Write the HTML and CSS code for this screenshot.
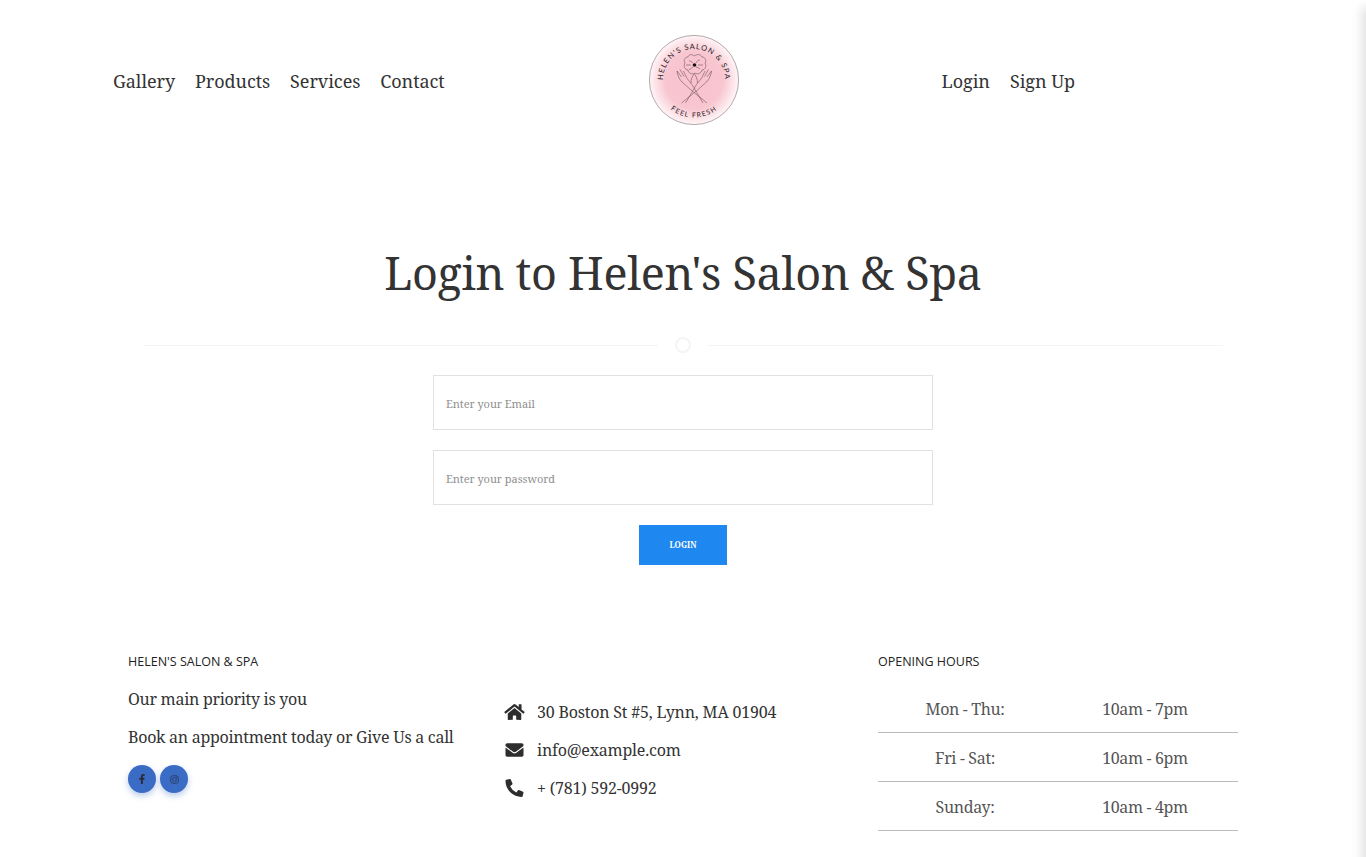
FILE: index.html
```html
<!DOCTYPE html>
<html lang="en">
<head>
<meta charset="utf-8">
<title>Login - Helen's Salon &amp; Spa</title>
<link rel="stylesheet" href="styles.css">
</head>
<body>
<div class="edge-shadow"></div>
<header class="topbar">
  <nav class="nav nav-left">
    <a href="#">Gallery</a><a href="#">Products</a><a href="#">Services</a><a href="#">Contact</a>
  </nav>
  <a class="logo" href="#">
    <svg width="92" height="92" viewBox="0 0 92 92">
      <defs>
        <radialGradient id="blush" cx="50%" cy="50%" r="50%">
          <stop offset="0" stop-color="#f8c2cd"/>
          <stop offset="0.65" stop-color="#f8c6d0"/>
          <stop offset="1" stop-color="#fff5f7"/>
        </radialGradient>
        <path id="arcTop" d="M15 46a31 31 0 0 1 62 0"/>
        <path id="arcBottom" d="M8.500 46a37.500 37.500 0 0 0 75 0"/>
        <g id="hand">
          <path d="M29 37c.5 4 2 8 5 11 3 3 6 5 9 8l16 13"/>
          <path d="M29 37l4.500 6M32 35.500l4 7M35.500 37l3 6.500M38.500 43.500c2 3 4 5 5.500 7l11 18.500"/>
          <path d="M46 40c-2 3-3 5-3 9"/>
        </g>
      </defs>
      <circle cx="46" cy="46" r="44.600" fill="url(#blush)" stroke="#7d7477" stroke-width=".6"/>
      <text class="logo-text"><textPath href="#arcTop" startOffset="50%" text-anchor="middle">HELEN'S SALON &amp; SPA</textPath></text>
      <text class="logo-text logo-text-low"><textPath href="#arcBottom" startOffset="50%" text-anchor="middle">FEEL FRESH</textPath></text>
      <g fill="none" stroke="#4a3238" stroke-width=".45">
        <path d="M46 22c3-2 7-2 8 1 3 0 5 4 3 6 2 3 0 7-3 7 0 3-5 5-7 3-3 2-7 0-7-3-3 0-5-4-3-7-2-3 0-6 3-6 1-3 4-3 6-1z"/>
        <path d="M41 27c2 0 3 1 4 2M52 26c-2 0-3 1-4 3M41 36c1-1 3-2 4-3M52 35c-1-1-3-2-4-2M38 31h5M55 31h-5"/>
        <use href="#hand"/>
        <use href="#hand" transform="matrix(-1 0 0 1 92.500 0)"/>
      </g>
      <circle cx="46.500" cy="31" r="1.800" fill="#111"/>
    </svg>
  </a>
  <nav class="nav nav-right">
    <a href="#">Login</a><a href="#">Sign Up</a>
  </nav>
</header>

<main class="login">
  <h1 class="title">Login to Helen's Salon &amp; Spa</h1>
  <div class="divider"><span class="rule"></span><span class="ring"></span><span class="rule"></span></div>
  <form class="form">
    <input class="field" type="email" placeholder="Enter your Email">
    <input class="field" type="password" placeholder="Enter your password">
    <button class="submit" type="button">LOGIN</button>
  </form>
</main>

<footer class="footer">
  <section class="col col-about">
    <h4 class="col-title">HELEN'S SALON &amp; SPA</h4>
    <p class="line">Our main priority is you</p>
    <p class="line">Book an appointment today or Give Us a call</p>
    <div class="social">
      <a class="social-btn" href="#"><svg width="10" height="10" viewBox="0 0 320 512"><path fill="#2b2b3a" d="M279 288l14-93h-89v-60c0-25 12-50 52-50h41V7s-37-7-72-7c-73 0-121 45-121 125v70H23v93h81v224h100V288z"/></svg></a>
      <a class="social-btn" href="#"><svg width="9" height="9" viewBox="0 0 24 24" fill="none" stroke="#2b3a66" stroke-width="2.400"><rect x="2" y="2" width="20" height="20" rx="6"/><circle cx="12" cy="12" r="5"/><circle cx="18" cy="6" r=".6"/></svg></a>
    </div>
  </section>
  <section class="col col-contact">
    <div class="contact"><svg class="ci" width="21" height="18" viewBox="0 0 576 512"><path d="M280.370 148.260L96 300.110V464a16 16 0 0 0 16 16l112.060-.29a16 16 0 0 0 15.920-16V368a16 16 0 0 1 16-16h64a16 16 0 0 1 16 16v95.640a16 16 0 0 0 16 16.050L464 480a16 16 0 0 0 16-16V300L295.670 148.260a12.190 12.190 0 0 0-15.300 0zM571.600 251.470L488 182.560V44.050a12 12 0 0 0-12-12h-56a12 12 0 0 0-12 12v72.610L318.470 43a48 48 0 0 0-61 0L4.340 251.470a12 12 0 0 0-1.600 16.900l25.500 31A12 12 0 0 0 45.150 301l235.220-193.740a12.190 12.190 0 0 1 15.300 0L530.900 301a12 12 0 0 0 16.900-1.600l25.500-31a12 12 0 0 0-1.700-16.930z"/></svg><span>30 Boston St #5, Lynn, MA 01904</span></div>
    <div class="contact"><svg class="ci" width="21" height="18" viewBox="0 0 512 512"><path d="M502.300 190.800c3.900-3.100 9.700-.2 9.700 4.700V400c0 26.500-21.500 48-48 48H48c-26.500 0-48-21.500-48-48V195.600c0-5 5.700-7.800 9.700-4.700 22.400 17.400 52.100 39.500 154.100 113.600 21.100 15.400 56.700 47.800 92.200 47.600 35.700.3 72-32.800 92.300-47.600 102-74.100 131.600-96.300 154-113.700zM256 320c23.200.4 56.600-29.200 73.400-41.400 132.700-96.300 142.800-104.700 173.400-128.700 5.800-4.500 9.200-11.500 9.200-18.900v-19c0-26.500-21.500-48-48-48H48C21.500 64 0 85.500 0 112v19c0 7.400 3.400 14.300 9.200 18.900 30.600 23.900 40.700 32.400 173.400 128.700 16.800 12.200 50.200 41.800 73.400 41.400z"/></svg><span>info@example.com</span></div>
    <div class="contact"><svg class="ci" width="21" height="18" viewBox="0 0 512 512"><path d="M497.390 361.800l-112-48a24 24 0 0 0-28 6.900l-49.600 60.600A370.660 370.660 0 0 1 130.600 204.110l60.600-49.600a23.940 23.940 0 0 0 6.900-28l-48-112A24.160 24.160 0 0 0 122.600.61l-104 24A24 24 0 0 0 0 48c0 256.500 207.900 464 464 464a24 24 0 0 0 23.400-18.600l24-104a24.290 24.290 0 0 0-14.010-27.600z"/></svg><span>+ (781) 592-0992</span></div>
  </section>
  <section class="col col-hours">
    <h4 class="col-title">OPENING HOURS</h4>
    <div class="hours">
      <div class="hours-row"><span>Mon - Thu:</span><span>10am - 7pm</span></div>
      <div class="hours-row"><span>Fri - Sat:</span><span>10am - 6pm</span></div>
      <div class="hours-row"><span>Sunday:</span><span>10am - 4pm</span></div>
    </div>
  </section>
</footer>
</body>
</html>
```
FILE: styles.css
```css
* { box-sizing: border-box; }
html, body { margin: 0; padding: 0; }
body {
  position: relative;
  height: 857px;
  overflow: hidden;
  background: #fff;
  color: #333;
  font-family: "Noto Serif", "DejaVu Serif", "Liberation Serif", serif;
}
a { color: inherit; text-decoration: none; }

.edge-shadow {
  position: absolute;
  top: 0;
  bottom: 0;
  right: 0;
  width: 16px;
  background: linear-gradient(to right, rgba(0, 0, 0, 0), rgba(0, 0, 0, .015) 40%, rgba(0, 0, 0, .09));
  -webkit-mask-image: linear-gradient(to bottom, transparent, #000 14px);
  mask-image: linear-gradient(to bottom, transparent, #000 14px);
}

.topbar {
  display: grid;
  grid-template-columns: 535px 92px 1fr;
  align-items: center;
  height: 162px;
  padding: 0 291px 0 113px;
}
.nav { display: flex; gap: 20px; font-size: 18px; letter-spacing: -.06px; color: #333; }
.nav-right { justify-content: flex-end; }
.logo { display: block; height: 92px; margin-bottom: 2px; }
.logo svg { display: block; }
.logo-text { font-family: Lato, "Liberation Sans", sans-serif; font-size: 7.500px; letter-spacing: 1px; fill: #2a1a1e; }
.logo-text-low { font-size: 6.800px; letter-spacing: 1.300px; }

.login { display: flex; flex-direction: column; align-items: center; }
.title { margin: 78px 0 0; font-size: 45px; line-height: 66px; font-weight: 400; letter-spacing: -.33px; color: #333; }
.divider { display: flex; align-items: center; width: 1080px; margin-top: 31px; height: 16px; }
.rule { flex: 1; height: 1px; background: #f4f4f4; }
.ring { width: 16px; height: 16px; margin: 0 17px; border: 2px solid #f4f4f4; border-radius: 50%; }
.form { display: flex; flex-direction: column; align-items: center; gap: 20px; margin-top: 22px; }
.field {
  display: block;
  width: 500px;
  height: 55px;
  padding: 2px 12px 0;
  border: 1px solid #e1e1e1;
  background: #fff;
  outline: 0;
  font: 400 11px "Noto Serif", "DejaVu Serif", serif;
  letter-spacing: -.05px;
  color: #333;
}
.field::placeholder { color: #8f8f8f; opacity: 1; }
.submit {
  width: 88px;
  height: 40px;
  padding: 0 0 2px;
  border: 0;
  background: #1e88f0;
  color: #fff;
  font: 700 8px "Noto Serif", "DejaVu Serif", serif;
}

.footer {
  display: flex;
  align-items: flex-start;
  margin-top: 89px;
  padding-left: 128px;
}
.col-title { margin: 0; font: 400 12.500px/16px "Open Sans", "Noto Sans", sans-serif; color: #222; }
.col-about { width: 376px; }
.line { margin: 0 0 19px; font-size: 16px; line-height: 19px; letter-spacing: -.28px; color: #333; }
.col-about .col-title { margin-bottom: 20px; }
.social { display: flex; gap: 4px; margin-top: -1px; }
.social-btn {
  display: flex;
  align-items: center;
  justify-content: center;
  width: 28px;
  height: 28px;
  border-radius: 50%;
  background: #3a6cc6;
  box-shadow: 0 3px 6px rgba(58, 108, 198, .35);
}
.col-contact { width: 374px; padding-top: 39px; }
.contact { display: flex; align-items: center; gap: 12px; height: 38px; font-size: 16px; letter-spacing: -.2px; color: #333; }
.ci { flex: none; fill: #2d2d2d; }
.col-hours { width: 360px; }
.hours { margin-top: 14px; }
.hours-row {
  display: grid;
  grid-template-columns: 174px 186px;
  height: 49px;
  padding-top: 2px;
  align-items: center;
  text-align: center;
  border-bottom: 1px solid #bbb;
  font-size: 16px;
  letter-spacing: -.35px;
  color: #555;
}
```
